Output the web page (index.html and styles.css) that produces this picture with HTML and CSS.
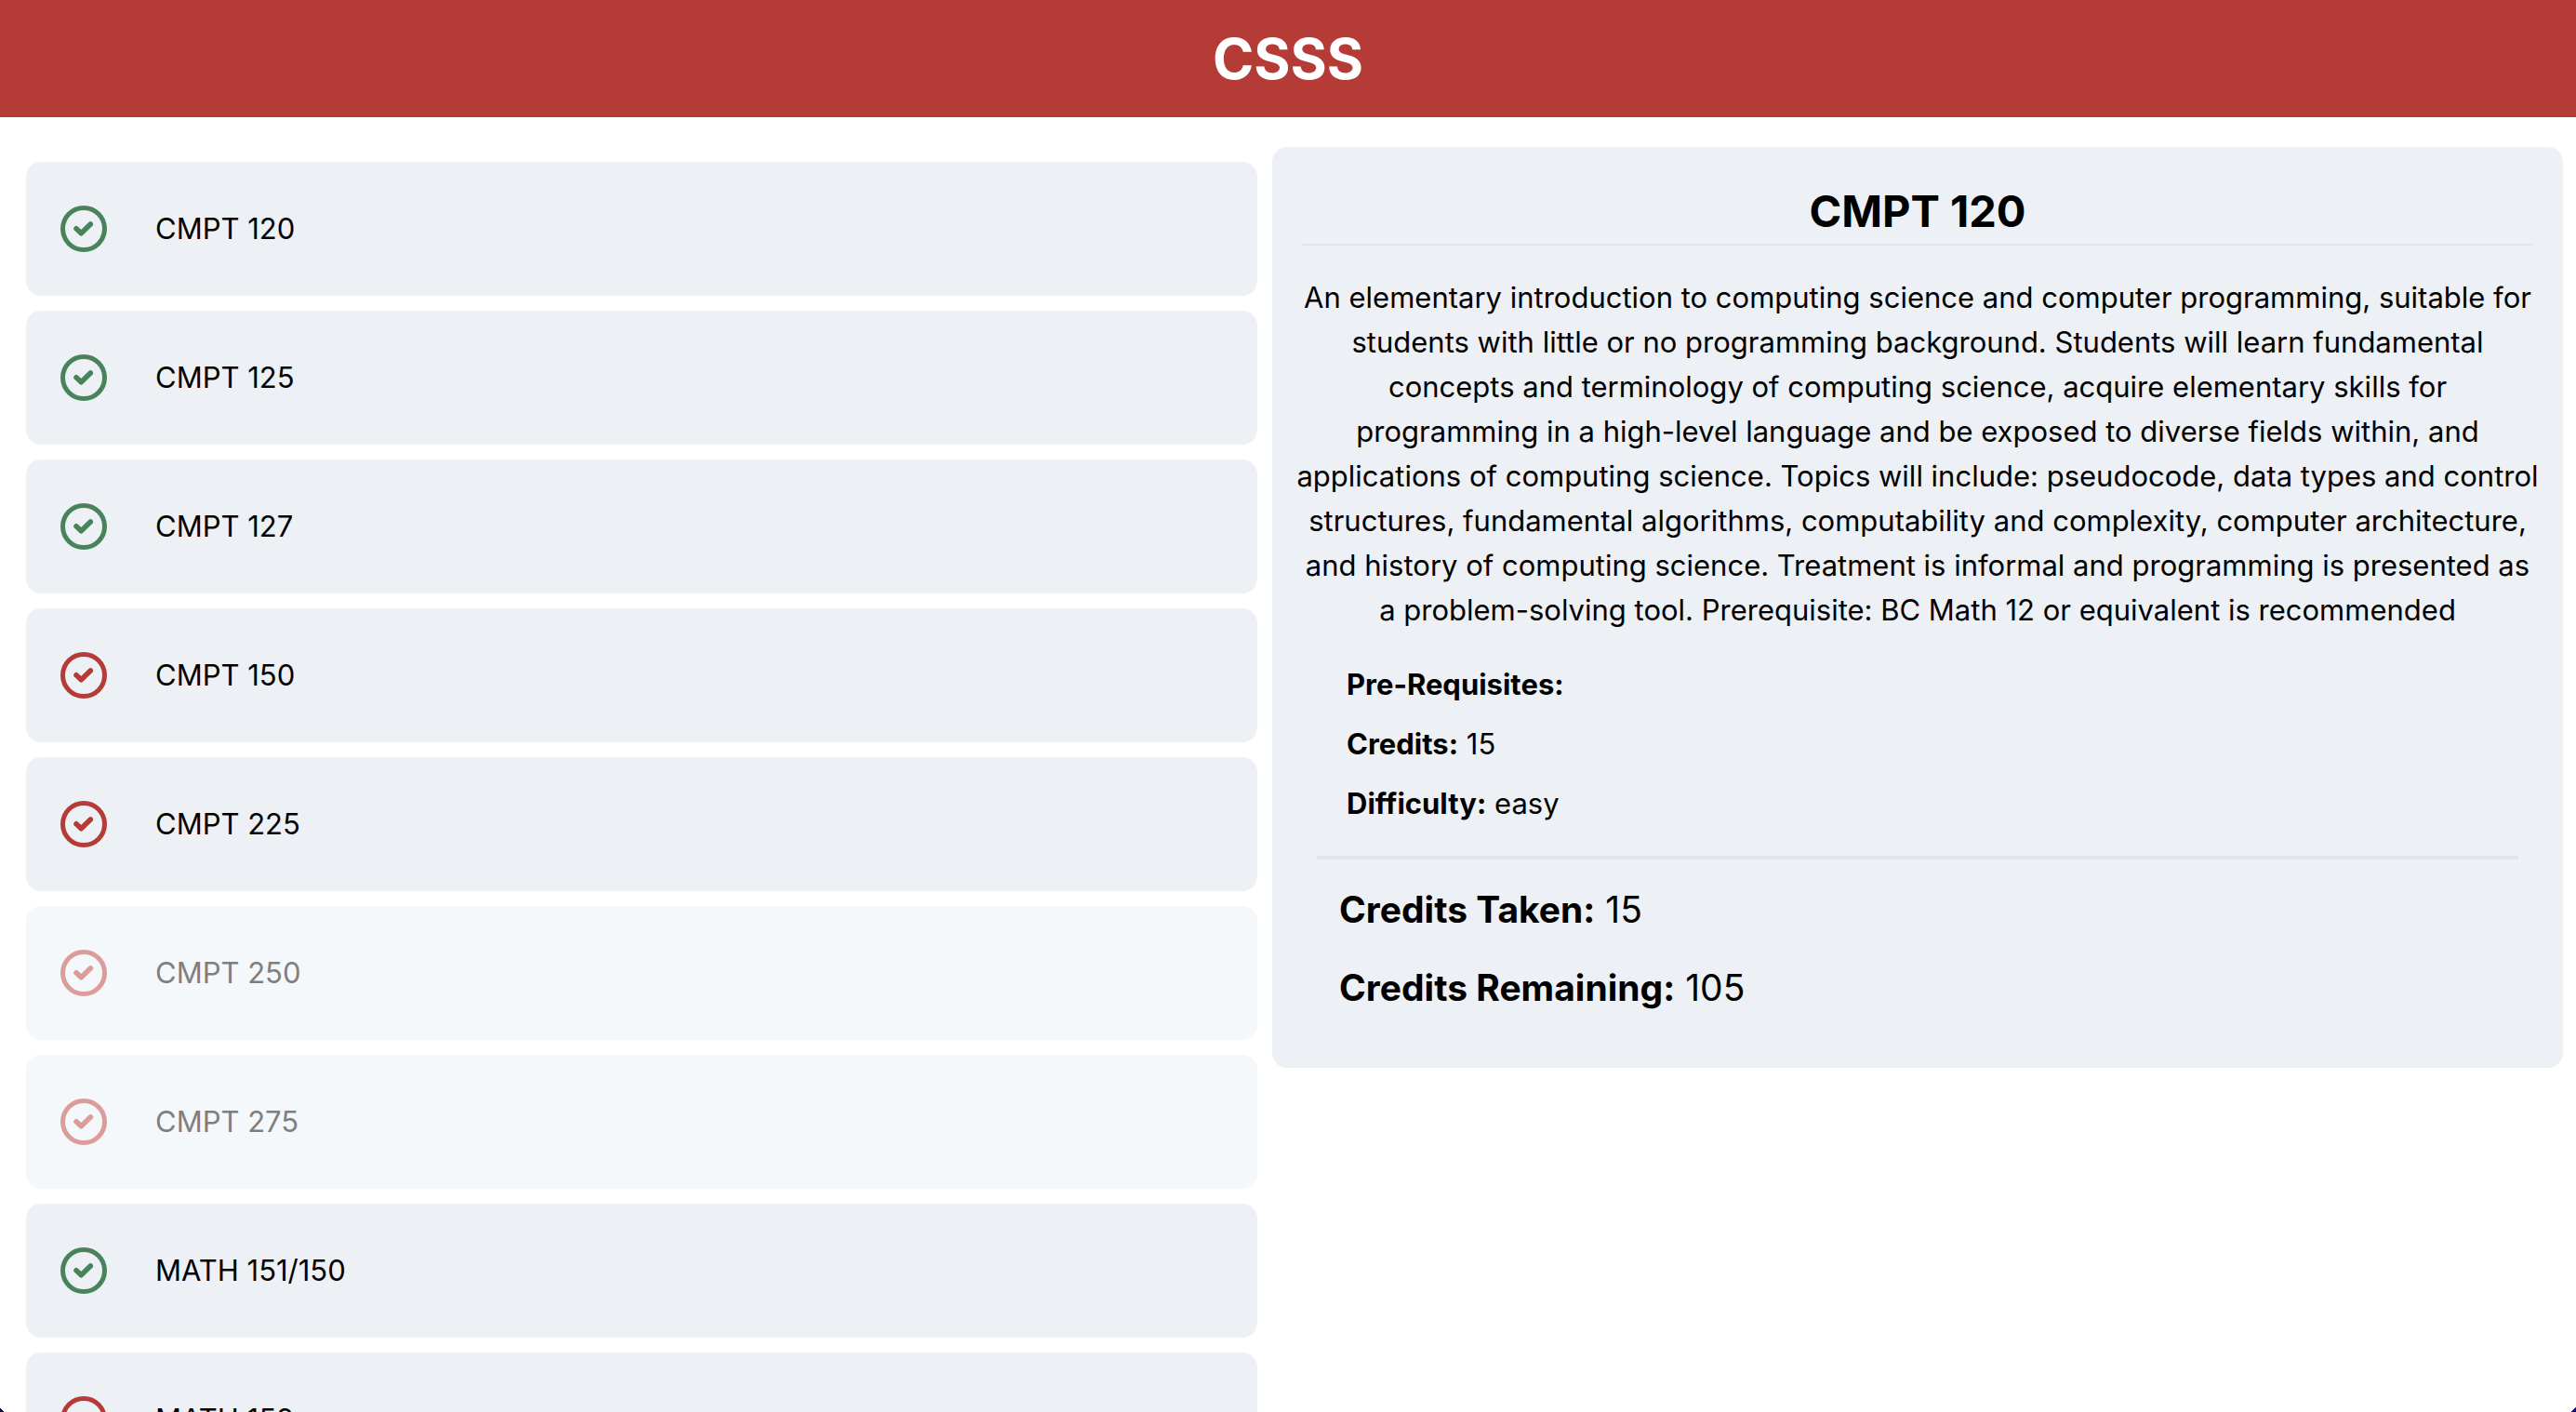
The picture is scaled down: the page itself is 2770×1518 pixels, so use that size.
FILE: index.html
```html
<!DOCTYPE html>
<html lang="en">
<head>
  <meta charset="utf-8">
  <title>CSSS</title>
  <link rel="stylesheet" href="styles.css">
</head>
<body>
  <svg class="sprite" aria-hidden="true">
    <symbol id="check" viewBox="0 0 50 50">
      <circle cx="25" cy="25" r="22.5"/>
      <path d="M17 24.8l5.3 5 10-9.8" stroke-width="5.6"/>
    </symbol>
  </svg>
  <div class="app">
    <header class="header"><h1 class="brand">CSSS</h1></header>
    <main class="main">
      <ul class="courses">
        <li><button class="course done" type="button"><svg class="icon" aria-hidden="true"><use href="#check"/></svg>CMPT 120</button></li>
        <li><button class="course done" type="button"><svg class="icon" aria-hidden="true"><use href="#check"/></svg>CMPT 125</button></li>
        <li><button class="course done" type="button"><svg class="icon" aria-hidden="true"><use href="#check"/></svg>CMPT 127</button></li>
        <li><button class="course" type="button"><svg class="icon" aria-hidden="true"><use href="#check"/></svg>CMPT 150</button></li>
        <li><button class="course" type="button"><svg class="icon" aria-hidden="true"><use href="#check"/></svg>CMPT 225</button></li>
        <li><button class="course" type="button" disabled><svg class="icon" aria-hidden="true"><use href="#check"/></svg>CMPT 250</button></li>
        <li><button class="course" type="button" disabled><svg class="icon" aria-hidden="true"><use href="#check"/></svg>CMPT 275</button></li>
        <li><button class="course done" type="button"><svg class="icon" aria-hidden="true"><use href="#check"/></svg>MATH 151/150</button></li>
        <li><button class="course" type="button"><svg class="icon" aria-hidden="true"><use href="#check"/></svg>MATH 152</button></li>
      </ul>
      <section class="panel">
        <h2 class="title">CMPT 120</h2>
        <p class="description">An elementary introduction to computing science and computer programming, suitable for students with little or no programming background. Students will learn fundamental concepts and terminology of computing science, acquire elementary skills for programming in a high-level language and be exposed to diverse fields within, and applications of computing science. Topics will include: pseudocode, data types and control structures, fundamental algorithms, computability and complexity, computer architecture, and history of computing science. Treatment is informal and programming is presented as a problem-solving tool. Prerequisite: BC Math 12 or equivalent is recommended</p>
        <div class="facts">
          <p><strong>Pre-Requisites:</strong></p>
          <p><strong>Credits:</strong> 15</p>
          <p><strong>Difficulty:</strong> easy</p>
        </div>
        <div class="totals">
          <p><strong>Credits Taken:</strong> 15</p>
          <p><strong>Credits Remaining:</strong> 105</p>
        </div>
      </section>
    </main>
  </div>
</body>
</html>
```

FILE: styles.css
```css
* { margin: 0; padding: 0; }

body {
  background: #fff;
  color: #000;
  font: 31px/48px Inter, "Liberation Sans", sans-serif;
}

.sprite { display: none; }

.app {
  display: flex;
  flex-direction: column;
  height: 100vh;
}

/* dark bevels in the two bottom corners of the window */
.app::after {
  content: "";
  position: fixed;
  inset: auto 0 0;
  height: 5px;
  background:
    linear-gradient(45deg, #160c33 3px, transparent 3px) left / 5px 5px no-repeat,
    linear-gradient(-45deg, #1c0c6e 4px, transparent 4px) right / 6px 6px no-repeat;
  pointer-events: none;
}

.header {
  flex: none;
  padding: 24px;
  background: #b53b37;
  color: #fff;
  text-align: center;
}

.brand { font-size: 60px; line-height: 78px; font-weight: 700; }

.main {
  display: flex;
  flex: 1;
  align-items: flex-start;
  gap: 16px;
  min-height: 0;
  padding: 32px 14px 0 28px;
  overflow-y: auto;
  scrollbar-width: none;
}

.courses {
  display: flex;
  flex: 1 1 0;
  flex-direction: column;
  gap: 16px;
  padding: 16px 0;
  list-style: none;
}

.course {
  display: flex;
  align-items: center;
  gap: 52px;
  box-sizing: border-box;
  width: 100%;
  height: 144px;
  padding: 0 37px;
  border: 0;
  border-radius: 16px;
  background: #edf0f5;
  color: #000;
  font: inherit;
  text-align: left;
  cursor: pointer;
}

.course:disabled { background: #f4f8fb; color: #7f7f7f; cursor: default; }

.icon {
  width: 50px;
  height: 50px;
  fill: none;
  stroke: #b53b37;
  stroke-width: 5;
  stroke-linecap: round;
  stroke-linejoin: round;
}

.done .icon { stroke: #48835c; }
.course:disabled .icon { stroke: #dc9c9a; }

.panel {
  flex: 1 1 0;
  padding: 32px 32px 56px;
  border-radius: 16px;
  background: #edf0f5;
}

.title {
  padding: 8px 0 6px;
  border-bottom: 2px solid #e2e5ea;
  font-size: 47px;
  line-height: 58px;
  font-weight: 700;
  text-align: center;
}

.description { margin: 32px -8px 0; text-align: center; }

.facts {
  display: grid;
  gap: 16px;
  margin: 32px 16px 0;
  padding: 0 32px 32px;
  border-bottom: 4px solid #e2e5ea;
}

.totals {
  display: grid;
  gap: 24px;
  padding: 24px 40px 0;
  font-size: 39px;
  line-height: 60px;
}
```
